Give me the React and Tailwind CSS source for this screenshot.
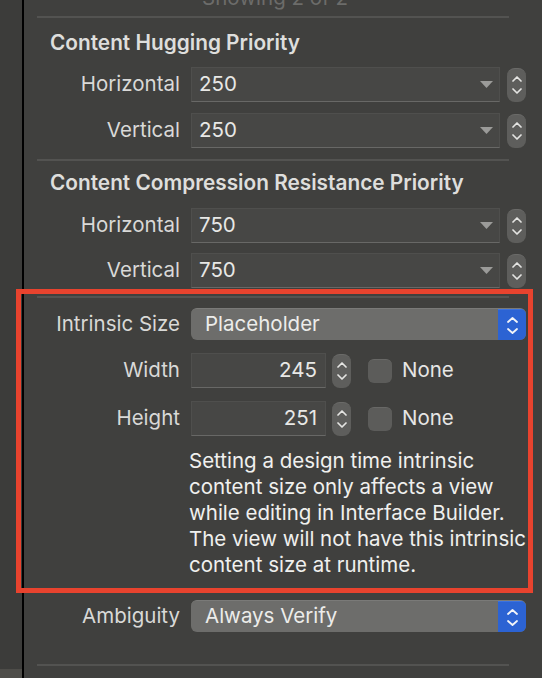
import React from "react";

const font = { fontFamily: "Inter, 'Noto Sans', sans-serif" };

function Chevrons({ w = 9, gap = 6, color = "#e4e4e2", stroke = 1.7 }) {
  const h = Math.round(w * 0.55);
  return (
    <div className="flex flex-col items-center" style={{ gap }}>
      <svg width={w} height={h} viewBox={`0 0 ${w} ${h}`}>
        <path d={`M1 ${h - 1} L${w / 2} 1 L${w - 1} ${h - 1}`} stroke={color} strokeWidth={stroke} fill="none" strokeLinecap="round" strokeLinejoin="round" />
      </svg>
      <svg width={w} height={h} viewBox={`0 0 ${w} ${h}`}>
        <path d={`M1 1 L${w / 2} ${h - 1} L${w - 1} 1`} stroke={color} strokeWidth={stroke} fill="none" strokeLinecap="round" strokeLinejoin="round" />
      </svg>
    </div>
  );
}

function Stepper() {
  return (
    <div className="w-[19px] h-[34px] shrink-0 rounded-[8px] bg-[#5e5e5c] border-t border-t-[#6a6a68] flex items-center justify-center">
      <Chevrons w={10} gap={6} />
    </div>
  );
}

function Triangle() {
  return (
    <svg width="13" height="7" viewBox="0 0 13 7">
      <polygon points="0,0 13,0 6.5,7" fill="#9b9b99" />
    </svg>
  );
}

function Label({ children }) {
  return (
    <div className="w-[157px] shrink-0 text-right text-[20.5px] text-[#d9d9d7] pr-[1px] whitespace-nowrap">{children}</div>
  );
}

function PriorityRow({ label, value, className = "" }) {
  return (
    <div className={"flex items-center h-[35px] " + className}>
      <Label>{label}</Label>
      <div className="ml-[10px] flex-1 h-[35px] bg-[#474745] border border-[#4f4f4d] border-b-[#686866] flex items-center pl-[7px] pr-[6px]">
        <span className="text-[20.5px] text-[#e8e8e6]">{value}</span>
        <span className="ml-auto flex items-center">
          <Triangle />
        </span>
      </div>
      <div className="ml-[7px]">
        <Stepper />
      </div>
    </div>
  );
}

function Popup({ label, value, className = "" }) {
  return (
    <div className={"flex items-center h-[32px] " + className}>
      <Label>{label}</Label>
      <div className="ml-[10px] flex-1 h-[32px] rounded-[6px] bg-[#6d6d6b] border-t border-t-[#7a7a78] flex overflow-hidden">
        <div className="flex-1 pl-[14px] flex items-center text-[20.5px] text-[#ececea]">{value}</div>
        <div className="w-[28px] bg-[#2c63d3] border-t border-t-[#3b72e0] flex items-center justify-center">
          <Chevrons w={11} gap={5} color="#f2f4f8" stroke={1.8} />
        </div>
      </div>
    </div>
  );
}

function SizeRow({ label, value, className = "" }) {
  return (
    <div className={"flex items-center h-[35px] " + className}>
      <Label>{label}</Label>
      <div className="ml-[10px] w-[135px] h-[35px] bg-[#474745] border border-[#4f4f4d] border-b-[#686866] flex items-center justify-end pr-[8px]">
        <span className="text-[20.5px] text-[#e8e8e6]">{value}</span>
      </div>
      <div className="ml-[6px]">
        <Stepper />
      </div>
      <div className="ml-[17px] w-[24px] h-[24px] rounded-[6px] bg-[#5c5c5a] border-t border-t-[#686866]" />
      <span className="ml-[10px] text-[20.5px] text-[#e6e6e4]">None</span>
    </div>
  );
}

function Separator({ className = "" }) {
  return <div className={"h-[2px] bg-[#535351] ml-[13px] mr-[17px] " + className} />;
}

function Heading({ children, className = "" }) {
  return (
    <div className={"h-[24px] leading-[24px] pl-[26px] text-[20.8px] font-semibold text-[#dededc] whitespace-nowrap " + className}>
      {children}
    </div>
  );
}

export default function App() {
  return (
    <div className="relative w-[542px] h-[678px] overflow-hidden bg-[#40403e] flex" style={font}>
      <div className="w-[22px] shrink-0 flex flex-col">
        <div className="flex-1 bg-[#3c3c3a]" />
        <div className="h-[9px] bg-[#4e4d49]" />
      </div>
      <div className="w-[2px] shrink-0 bg-black" />
      <div className="flex-1 flex flex-col pr-[16px]">
        <div className="mt-[-12px] h-[20px] leading-[20px] text-center text-[20.5px] text-[#6c6c6a]">Showing 2 of 2</div>
        <Separator className="mt-[8px]" />
        <Heading className="mt-[13px]">Content Hugging Priority</Heading>
        <PriorityRow label="Horizontal" value="250" className="mt-[12px]" />
        <PriorityRow label="Vertical" value="250" className="mt-[11px]" />
        <Separator className="mt-[11px] mr-[1px]" />
        <Heading className="mt-[10px]">Content Compression Resistance Priority</Heading>
        <PriorityRow label="Horizontal" value="750" className="mt-[13px]" />
        <PriorityRow label="Vertical" value="750" className="mt-[10px]" />
        <Separator className="mt-[8px] mr-[1px]" />
        <Popup label="Intrinsic Size" value="Placeholder" className="mt-[10px]" />
        <SizeRow label="Width" value="245" className="mt-[13px]" />
        <SizeRow label="Height" value="251" className="mt-[13px]" />
        <div className="mt-[12px] ml-[165px] text-[20.5px] leading-[26px] text-[#f0f0ee] whitespace-nowrap">
          <div>Setting a design time intrinsic</div>
          <div>content size only affects a view</div>
          <div>while editing in Interface Builder.</div>
          <div>The view will not have this intrinsic</div>
          <div>content size at runtime.</div>
        </div>
        <Popup label="Ambiguity" value="Always Verify" className="mt-[22px]" />
        <Separator className="mt-[32px] ml-0 mr-[-16px]" />
      </div>
      <div className="absolute left-[16px] top-[289px] w-[517px] h-[304px] border-[5px] border-[#e8432e] pointer-events-none" />
    </div>
  );
}
